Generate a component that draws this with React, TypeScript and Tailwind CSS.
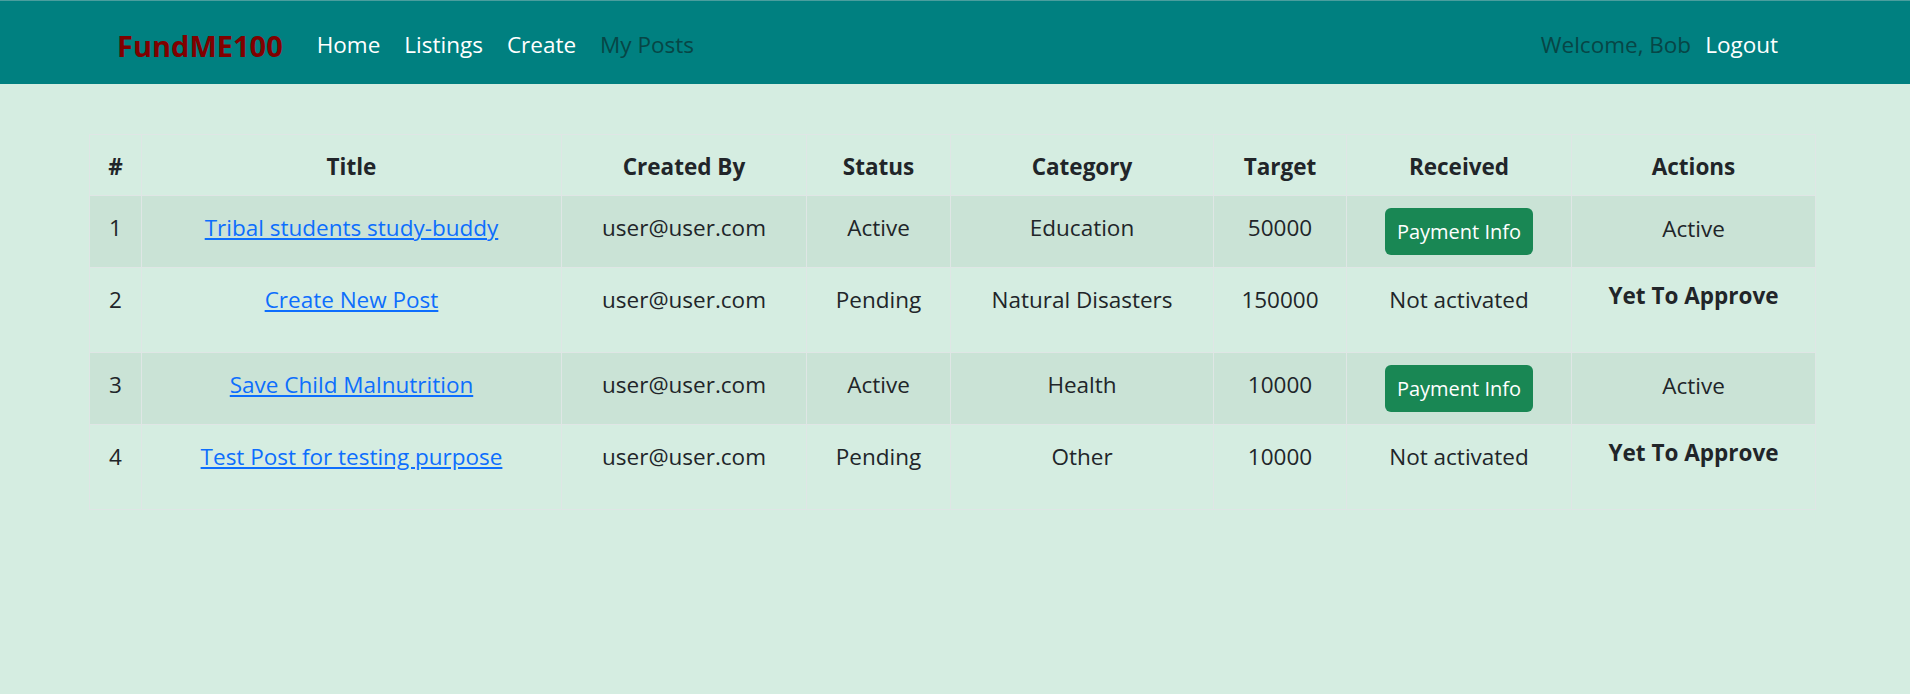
import React from 'react';

type Post = {
  id: number;
  title: string;
  createdBy: string;
  status: 'Active' | 'Pending';
  category: string;
  target: number;
};

const posts: Post[] = [
  { id: 1, title: 'Tribal students study-buddy', createdBy: 'user@user.com', status: 'Active', category: 'Education', target: 50000 },
  { id: 2, title: 'Create New Post', createdBy: 'user@user.com', status: 'Pending', category: 'Natural Disasters', target: 150000 },
  { id: 3, title: 'Save Child Malnutrition', createdBy: 'user@user.com', status: 'Active', category: 'Health', target: 10000 },
  { id: 4, title: 'Test Post for testing purpose', createdBy: 'user@user.com', status: 'Pending', category: 'Other', target: 10000 },
];

const headers = ['#', 'Title', 'Created By', 'Status', 'Category', 'Target', 'Received', 'Actions'];
const widths = [52, 420, 245, 144, 263, 133, 225, 244];

function Navbar() {
  return (
    <nav className="h-[84px] bg-[#008080] border-t border-[#4a9e9e] flex items-center justify-between pt-[5px] pl-[117px] pr-[120px]">
      <div className="flex items-center">
        <a href="#" className="text-[29px] font-bold text-[#800000] mr-[22px] leading-none">FundME100</a>
        <a href="#" className="px-[12px] text-[22.5px] text-white">Home</a>
        <a href="#" className="px-[12px] text-[22.5px] text-white">Listings</a>
        <a href="#" className="px-[12px] text-[22.5px] text-white">Create</a>
        <a href="#" className="px-[12px] text-[22.5px] text-[#074646]">My Posts</a>
      </div>
      <div className="flex items-center">
        <span className="text-[22.5px] text-[#074646] mr-[2px]">Welcome, Bob</span>
        <a href="#" className="px-[12px] text-[22.5px] text-white">Logout</a>
      </div>
    </nav>
  );
}

const cell = 'border border-[#dfe6e5] px-[12px] pt-[14px] pb-[10px] align-top';

export default function App() {
  return (
    <div
      className="min-h-screen bg-[#d5ede1] text-[#212529]"
      style={{ fontFamily: '"Open Sans", "Noto Sans", sans-serif' }}
    >
      <Navbar />
      <div className="pt-[50px] pl-[89px]">
        <table className="table-fixed border-collapse w-[1726px] text-[22.5px] leading-[36px] text-center">
          <colgroup>
            {widths.map((w, i) => (
              <col key={i} style={{ width: w }} />
            ))}
          </colgroup>
          <thead>
            <tr>
              {headers.map((h) => (
                <th key={h} className={`${cell} font-bold`}>
                  {h}
                </th>
              ))}
            </tr>
          </thead>
          <tbody>
            {posts.map((p, i) => {
              const active = p.status === 'Active';
              return (
                <tr key={p.id} className={i % 2 === 0 ? 'bg-[#cae3d6]' : ''}>
                  <td className={cell}>{p.id}</td>
                  <td className={cell}>
                    <a href="#" className="text-[#0d6efd] underline">{p.title}</a>
                  </td>
                  <td className={cell}>{p.createdBy}</td>
                  <td className={cell}>{p.status}</td>
                  <td className={cell}>{p.category}</td>
                  <td className={cell}>{p.target}</td>
                  <td className={active ? 'border border-[#dfe6e5] px-[12px] py-[12px] align-top' : cell}>
                    {active ? (
                      <button className="inline-flex items-center justify-center align-middle h-[47px] w-[148px] bg-[#198754] text-white text-[20px] rounded-[6px]">
                        Payment Info
                      </button>
                    ) : (
                      'Not activated'
                    )}
                  </td>
                  <td className={active ? `${cell} pt-[15px]` : 'border border-[#dfe6e5] px-[12px] pt-[10px] pb-[12px] align-top'}>
                    {active ? 'Active' : <p className="mb-[26px] font-bold">Yet To Approve</p>}
                  </td>
                </tr>
              );
            })}
          </tbody>
        </table>
      </div>
    </div>
  );
}
